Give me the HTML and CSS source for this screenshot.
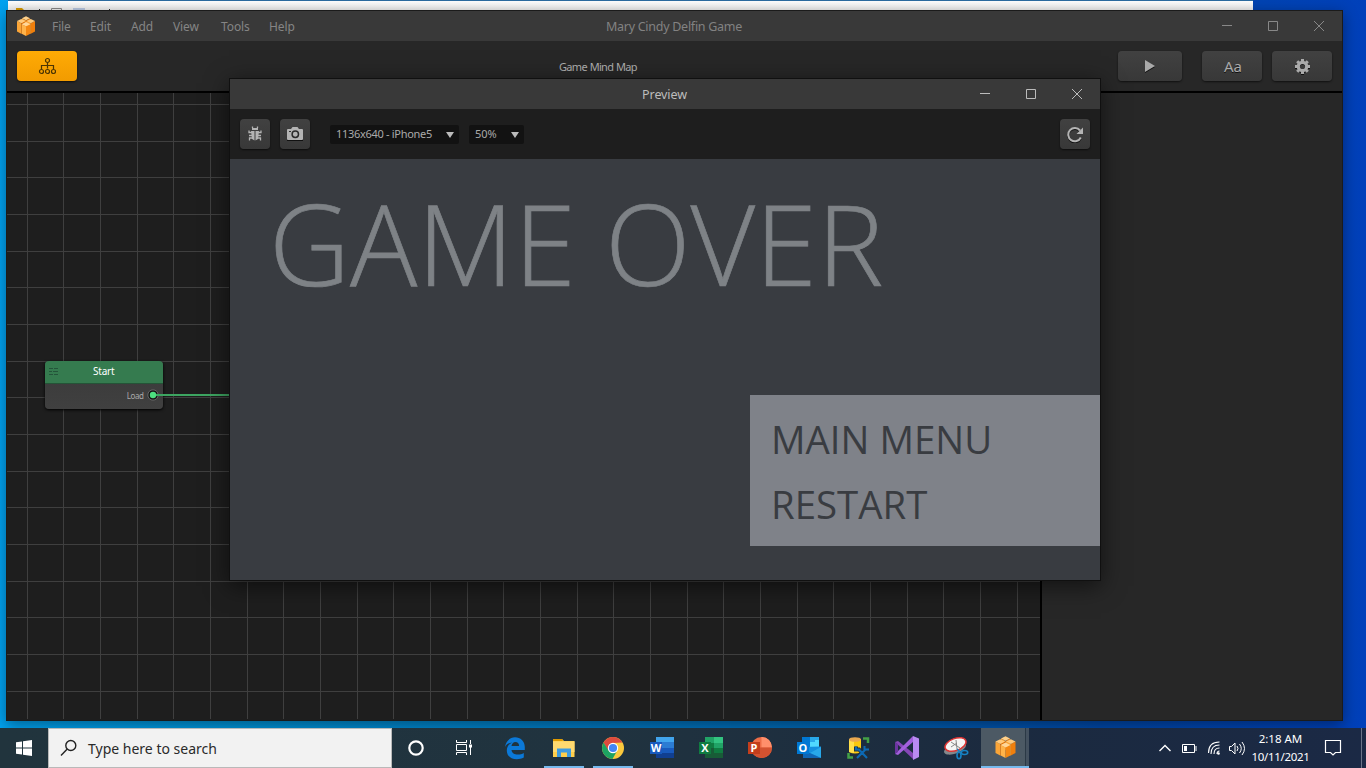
FILE: index.html
```html
<!DOCTYPE html>
<html lang="en">
<head>
<meta charset="utf-8">
<title>Mary Cindy Delfin Game</title>
<link rel="stylesheet" href="styles.css">
</head>
<body>
<svg width="0" height="0" class="defs">
  <symbol id="box" viewBox="0 0 20 22">
    <path d="M5.500 2.500 10 5v9l-4.500-2z" fill="#f9a030"/><path d="M14.500 2.500 10 5v9l4.500-2z" fill="#ea7c10"/>
    <path d="M5.500 2.500 10 .3l4.500 2.200L10 4.700z" fill="#ffd08a"/>
    <path d="M0 5.500 4.700 8v11.500L0 17z" fill="#fba537"/><path d="M4.700 8 9.500 5.500v13l-4.800 1z" fill="#dd6f08"/>
    <path d="M0 5.500 4.700 3.200 9.500 5.500 4.700 7.900z" fill="#ffca7c"/>
    <path d="M10.500 5.500 15.300 8v11.500l-4.800-1z" fill="#fba537"/><path d="M15.300 8 20 5.500V17l-4.700 2.500z" fill="#f07f0c"/>
    <path d="M10.500 5.500l4.800-2.300L20 5.500l-4.700 2.400z" fill="#ffca7c"/>
    <path d="M5.200 9 10 11.500V22l-4.800-2.500z" fill="#ffb34a"/><path d="M10 11.500 14.800 9v10.500L10 22z" fill="#f48712"/>
    <path d="M5.200 9 10 6.600 14.800 9 10 11.400z" fill="#ffd698"/>
  </symbol>
</svg>
<main class="desktop">
  <div class="back-window">
    <svg width="120" height="9"><path d="M8 7h6l2 2H8z" fill="#d79a00"/><path d="M31 8h1v1h-1zM101 8h1v1h-1z" fill="#333"/><path d="M43.500 9V7.500h10V9" fill="none" stroke="#888"/><path d="M65 7h12v2H65z" fill="#b9c9e2"/></svg>
  </div>

  <section class="window app">
    <header class="titlebar">
      <svg class="logo" width="18" height="20"><use href="#box"/></svg>
      <nav class="menu"><span>File</span><span>Edit</span><span>Add</span><span>View</span><span>Tools</span><span>Help</span></nav>
      <h1 class="title app-title">Mary Cindy Delfin Game</h1>
      <div class="controls">
        <svg width="46" height="30"><path d="M18 14.500h10"/></svg>
        <svg width="46" height="30"><path d="M18.500 10.500h9v9h-9z"/></svg>
        <svg width="46" height="30"><path d="M18 10l10 10M28 10l-10 10"/></svg>
      </div>
    </header>
    <div class="toolbar">
      <button class="btn map-btn">
        <svg width="18" height="18" fill="none" stroke="#4c3503" stroke-width="1.200"><circle cx="9.500" cy="3.500" r="2"/><path d="M9.500 5.500v6M3.500 12V8.500h12V12"/><circle cx="3.500" cy="14.500" r="2"/><circle cx="9.500" cy="14.500" r="2"/><circle cx="15.500" cy="14.500" r="2"/></svg>
      </button>
      <div class="crumb">Game Mind Map</div>
      <button class="btn play-btn"><svg width="12" height="14"><path d="M1 2l10 6-10 6z" fill="#111"/><path d="M1 1l10 6-10 6z" fill="#aaa"/></svg></button>
      <button class="btn font-btn">Aa</button>
      <button class="btn gear-btn"><svg width="16" height="17" viewBox="-8.500 -8.500 16 17"><g fill="none" stroke="#111"><circle cy="1" r="4.200" stroke-width="3"/><path d="M0-6.500v2M0 6.500v2M-7.500 1h2M5.500 1h2" stroke-width="3"/></g><g fill="none" stroke="#aaa"><circle r="4.200" stroke-width="3.200"/><path d="M0-7.500v2.500M0 7.500V5M-7.500 0H-5M7.500 0H5M-5.300-5.300l1.800 1.800M5.300 5.300 3.500 3.500M5.300-5.300 3.500-3.500M-5.300 5.300l1.800-1.800" stroke-width="3"/></g></svg></button>
    </div>
    <div class="workspace">
      <div class="mindmap">
        <svg class="grid" width="1033" height="627" viewBox="7 93 1033 627" fill="none" stroke="#3f3f3f"><path d="M27.500 93v626M63.500 93v626M100.500 93v626M137.500 93v626M173.500 93v626M210.500 93v626M247.500 93v626M283.500 93v626M320.500 93v626M357.500 93v626M393.500 93v626M430.500 93v626M467.500 93v626M503.500 93v626M540.500 93v626M577.500 93v626M613.500 93v626M650.500 93v626M687.500 93v626M723.500 93v626M760.500 93v626M797.500 93v626M833.500 93v626M870.500 93v626M907.500 93v626M943.500 93v626M980.500 93v626M1017.500 93v626M7 104.500h1033M7 141.500h1033M7 177.500h1033M7 214.500h1033M7 251.500h1033M7 287.500h1033M7 324.500h1033M7 361.500h1033M7 397.500h1033M7 434.500h1033M7 471.500h1033M7 507.500h1033M7 544.500h1033M7 581.500h1033M7 617.500h1033M7 654.500h1033M7 691.500h1033"/></svg>
        <div class="node">
          <div class="node-head">
            <svg width="10" height="8" stroke="#24543a"><path d="M0 1.500h4M5 1.500h4M0 4.500h3M4 4.500h5M0 7.500h4M5 7.500h4"/></svg>
            <span>Start</span>
          </div>
          <div class="node-body">Load</div>
        </div>
        <svg class="wire" width="100" height="14"><circle cx="7" cy="7" r="5.200" fill="#161616" stroke="#666"/><path d="M7 7h93" stroke="#3da561" stroke-width="2"/><circle cx="7" cy="7" r="3.200" fill="#4ddf80"/></svg>
      </div>
      <aside class="side"></aside>
    </div>
  </section>

  <section class="window preview">
    <header class="titlebar">
      <h2 class="title preview-title">Preview</h2>
      <div class="controls light">
        <svg width="46" height="30"><path d="M18 14.500h10"/></svg>
        <svg width="46" height="30"><path d="M18.500 10.500h9v9h-9z"/></svg>
        <svg width="46" height="30"><path d="M18 10l10 10M28 10l-10 10"/></svg>
      </div>
    </header>
    <div class="preview-tools">
      <button class="btn square"><svg width="14" height="16"><g fill="none" stroke="#b4b4b4" stroke-width="1.300"><path d="M4.500.5v1.500M9.500.5v1.500M1 4.500v2h3M1 9.500h3M1.500 14.500V12H4M13 4.500v2h-3M13 9.500h-3M12.500 14.500V12H10"/></g><path d="M4 2h6v2H4zM3 5h3.500v9.500L4 13zM7.500 5H11l-1 8-2.500 1.500z" fill="#b4b4b4"/></svg></button>
      <button class="btn square"><svg width="16" height="16"><path d="M0 4h4l2-2h5l1.500 2H16v11H0z" fill="#111"/><path d="M1 3h3l1.500-2h5L12 3h3q1 0 1 1v9q0 1-1 1H1q-1 0-1-1V4q0-1 1-1z" fill="#b4b4b4"/><circle cx="8.300" cy="8.300" r="3.200" fill="none" stroke="#2b2b2b" stroke-width="1.500"/><path d="M2 5h2v1H2z" fill="#333"/></svg></button>
      <div class="select device"><span>1136x640 - iPhone5</span><i></i></div>
      <div class="select scale"><span>50%</span><i></i></div>
      <button class="btn square reload"><svg width="16" height="17" fill="none"><path d="M13.800 12.500A6.600 6.600 0 1 1 13 5.500" stroke="#111" stroke-width="2"/><path d="M13.800 11.500A6.600 6.600 0 1 1 13 4.500" stroke="#b4b4b4" stroke-width="2"/><path d="M16 1.500V8H9.500z" fill="#b4b4b4"/></svg></button>
    </div>
    <div class="stage">
      <div class="game-over">GAME OVER</div>
      <div class="choices"><span class="main-menu">MAIN MENU</span><span class="restart">RESTART</span></div>
    </div>
  </section>
</main>

<footer class="taskbar">
  <div class="start"><svg width="16" height="16" fill="#fff"><path d="M0 2.300 6 1.400V7.500H0zM7 1.200 16 0v7.500H7zM0 8.500h6v6.100l-6-.9zM7 8.500h9V16l-9-1.200z"/></svg></div>
  <div class="search"><svg width="18" height="18" fill="none" stroke="#222" stroke-width="1.400"><circle cx="10.800" cy="6.500" r="5"/><path d="M7 10.200 1 16.500"/></svg><span>Type here to search</span></div>
  <div class="tasks">
    <div class="task shell"><svg width="24" height="24"><circle cx="12" cy="12" r="6.700" fill="none" stroke="#fff" stroke-width="2.200"/></svg></div>
    <div class="task shell"><svg width="24" height="24" fill="none" stroke="#fff"><path d="M3.500 4v2.500h10V4M3.500 19v-2.500h10V19M3.500 8.500h10v6h-10zM17.500 4v4M17.500 11v8"/><path d="M16 8.500h3v3h-3z" fill="#fff" stroke="none"/></svg></div>
    <div class="task"><svg width="24" height="24"><path d="M2 11C3 4.500 7.500 1.200 12 1.200c5.500 0 9.800 4 9.800 9.800v3H8.500c.2 3 3.200 4.600 6.300 4.600 2.300 0 4.400-.6 6-1.600v4.600c-2 1-4.500 1.600-7 1.600-5.500 0-10-3.200-10-8.800 0-3.600 2-6.500 5.500-8C5.500 6.800 3.500 8.500 2 11zm6.500-1h7.600c0-2.500-1.500-4-3.700-4-2.100 0-3.600 1.700-3.900 4z" fill="#0b79d8" fill-rule="evenodd"/></svg></div>
    <div class="task running"><svg width="24" height="24"><path d="M1 3h9l2 2h10.500v16H1z" fill="#ffcf4b"/><path d="M1 3h9l1 2H1z" fill="#e09a00"/><path d="M1 5.500h21.500V16H1z" fill="#ffda70"/><path d="M5 12.500h14V21h-4v-4.500H9V21H5z" fill="#3e9be0"/></svg></div>
    <div class="task running"><svg width="24" height="24" viewBox="0 0 24 24"><circle cx="12" cy="12" r="11" fill="#fbc93d"/><path d="M2.500 6.500A11 11 0 0 1 21.500 6.500L12 7l-5 8z" fill="#dd4b3e"/><path d="M2.500 6.500A11 11 0 0 0 11.500 23l4.500-8-4 2-4.500-2.500z" fill="#1da362"/><circle cx="12" cy="12" r="5.200" fill="#fff"/><circle cx="12" cy="12" r="4.100" fill="#4285f4"/></svg></div>
    <div class="task"><svg width="24" height="24"><path d="M6 1h18v6H6z" fill="#41a5ee"/><path d="M6 6h18v6H6z" fill="#2b7cd3"/><path d="M6 12h18v5H6z" fill="#185abd"/><path d="M6 17h18v5H6z" fill="#103f91"/><path d="M0 6h12v12H0z" fill="#185abd"/><text class="office" x="6" y="16">W</text></svg></div>
    <div class="task"><svg width="24" height="24"><path d="M6 1h9v6H6z" fill="#21a366"/><path d="M15 1h9v6h-9z" fill="#33c481"/><path d="M6 7h9v5H6z" fill="#107c41"/><path d="M15 7h9v5h-9z" fill="#21a366"/><path d="M6 12h18v10H6z" fill="#185c37"/><path d="M15 12h9v5h-9z" fill="#107c41"/><path d="M0 6h12v12H0z" fill="#107c41"/><text class="office" x="6" y="16">X</text></svg></div>
    <div class="task"><svg width="24" height="24"><circle cx="13.500" cy="11.500" r="10.500" fill="#ed6c47"/><path d="M13.500 1a10.500 10.500 0 0 1 10.500 10.500H13.500z" fill="#ff8f6b"/><path d="M3 11.500h21a10.500 10.500 0 0 1-21 0z" fill="#d35230"/><path d="M0 6h12v12H0z" fill="#c43e1c"/><text class="office" x="6" y="16">P</text></svg></div>
    <div class="task"><svg width="24" height="24"><path d="M5 1h17v13H5z" fill="#0078d4"/><path d="M13 1h9v5h-9z" fill="#28a8ea"/><path d="M18 4h4v7h-9V6h5z" fill="#50d9ff"/><path d="M6 11l18-.5V22H6z" fill="#1490df"/><path d="M24 11v11L13 17z" fill="#28a8ea"/><path d="M6 14l18 8H6z" fill="#1066b5"/><path d="M0 6h12v12H0z" fill="#0078d4"/><text class="office" x="6" y="16">O</text></svg></div>
    <div class="task"><svg width="24" height="24"><path d="M3 3h12v13q-6 3-12 0z" fill="#f9c80e"/><path d="M3 3h5v14l-5-1z" fill="#ffe04a"/><ellipse cx="9" cy="3.500" rx="6" ry="2.300" fill="#e9a850"/><path d="M17 2.500h5V7M2.500 17v4.500H7" fill="none" stroke="#43a047" stroke-width="2.500"/><path d="M10 10.500v3h3l8 8.500M11 22l9-9M18.500 10v3.500H23" fill="none" stroke="#20323e" stroke-width="4"/><path d="M10 10.500v3h3l8 8.500M11 22l9-9M18.500 10v3.500H23" fill="none" stroke="#0c69b5" stroke-width="2"/></svg></div>
    <div class="task"><svg width="24" height="24"><path d="M0 6l3-1 15 12v6z" fill="#8547b7"/><path d="M0 18l3 1L18 6V0z" fill="#a260dc"/><path d="M0 6l3 2v8l-3 2z" fill="#6a35a0"/><path d="M18 0l6 2.500v18.500L18 24z" fill="#b98af2"/></svg></div>
    <div class="task"><svg width="26" height="24"><ellipse cx="12" cy="12.500" rx="11.500" ry="5" transform="rotate(-20 12 12.500)" fill="#84888c"/><ellipse cx="12.500" cy="8.500" rx="11" ry="6" transform="rotate(-20 12.500 8.500)" fill="#f5f5f5" stroke="#dc3535" stroke-width="1.500"/><path d="M8 6l9 6M13 4l1 9M8 11l6-4" stroke="#888" fill="none"/><g fill="none" stroke="#1682c4" stroke-width="1.600"><ellipse cx="16" cy="19.500" rx="2" ry="3.200"/><ellipse cx="21.500" cy="16.500" rx="3.200" ry="2"/><path d="M14 13l4 4"/></g></svg></div>
    <div class="task active"><svg width="21" height="22"><use href="#box"/></svg></div>
  </div>
  <div class="tray">
    <svg width="204" height="40" viewBox="1150 0 204 40" fill="none" stroke="#fff">
      <path d="M1159.500 23l5.500-5.500 5.500 5.500" stroke-width="1.400"/>
      <path d="M1182.500 16.500h12v8h-12zM1196 18v5"/><path d="M1184 18h3v5h-3z" fill="#fff" stroke="none"/>
      <path d="M1208.500 25c0-8 4-11 11-11M1211 26c0-6 3-9 8.500-9M1214 26c0-4 2-6 5.500-6M1217 26q0-3 2.500-3" stroke-width="1.100"/><circle cx="1218.500" cy="25.500" r="1.300" fill="#fff" stroke="none"/>
      <path d="M1229.500 18.500h2l3.500-3.500v11l-3.500-3.500h-2zM1237 18q2 2.500 0 5M1239.500 16q3.500 4.500 0 9M1242 14q5 6.500 0 13"/>
    </svg>
    <div class="clock"><span class="time">2:18 AM</span><span class="date">10/11/2021</span></div>
    <svg class="notice" width="18" height="18" fill="none" stroke="#fff" stroke-width="1.200"><path d="M1.500 1.500h15v12h-5l-2.500 2.500-2.500-2.500h-5z"/></svg>
    <i class="peek"></i>
  </div>
</footer>
</body>
</html>
```
FILE: styles.css
```css
* { box-sizing: border-box; }
body { margin: 0; width: 1366px; height: 768px; overflow: hidden; font-family: "Noto Sans", "Open Sans", sans-serif; background: #0a2a50; }
svg { display: block; flex: none; }
.defs { position: absolute; }
button { border: 0; padding: 0; font: inherit; }
.desktop { position: relative; height: 728px; overflow: hidden; background: linear-gradient(90deg, #00a2f0 0, #0094d8 240px, #0068b4 800px, #0048a8 1100px, #0040ba 1366px); }
.back-window { position: absolute; left: 8px; top: 0; width: 1245px; height: 40px; background: linear-gradient(#fff, #ececec 10px); border-top: 1px solid #2c6ca0; }
.window { position: absolute; display: flex; flex-direction: column; }
.app { left: 6px; top: 10px; width: 1337px; height: 711px; border: 1px solid #1b1b1b; box-shadow: 0 4px 14px rgba(0,0,0,.4); }
.titlebar { height: 30px; flex: none; display: flex; align-items: center; background: #393939; position: relative; }
.logo { margin-left: 10px; }
.menu { display: grid; grid-template-columns: 38px 41px 42px 48px 48px 30px; margin-left: 17px; font-size: 12px; letter-spacing: -.1px; color: #858585; line-height: 30px; padding-top: 2px; }
.title { margin: 0; position: absolute; top: 1px; left: 0; right: 1px; text-align: center; font-size: 12.500px; font-weight: 400; line-height: 30px; }
.app-title { color: #828282; letter-spacing: -.27px; }
.preview-title { color: #bdbdbd; letter-spacing: -.1px; }
.controls { margin-left: auto; display: flex; position: relative; }
.controls svg { fill: none; stroke: #888; }
.controls.light svg { stroke: #bbb; }
.toolbar { height: 52px; flex: none; background: #272727; border-bottom: 2px solid #000; display: flex; align-items: center; padding: 0 10px; }
.btn { height: 30px; border-radius: 4px; background: linear-gradient(#414141, #383838); box-shadow: 0 1px 2px rgba(0,0,0,.6); display: flex; align-items: center; justify-content: center; color: #aaa; }
.map-btn { width: 60px; background: linear-gradient(#ffab05, #f29b00); }
.crumb { font-size: 11px; letter-spacing: -.68px; word-spacing: .5px; color: #b0b0b0; margin-left: 482px; padding-top: 1px; width: 90px; white-space: nowrap; }
.play-btn { width: 64px; margin-left: auto; margin-right: 20px; }
.font-btn { width: 60px; margin-right: 10px; font-size: 15px; text-shadow: 0 1px #111; padding-left: 2px; }
.gear-btn { width: 60px; }
.workspace { flex: 1; display: flex; min-height: 0; }
.mindmap { width: 1033px; background: #1e1e1e; position: relative; overflow: hidden; }
.side { flex: 1; background: #272727; border-left: 2px solid #000; }
.node { position: absolute; left: 38px; top: 267.500px; width: 117.500px; height: 48.500px; border-radius: 4px; overflow: hidden; background: linear-gradient(#393939, #404040); box-shadow: 0 1px 3px #000; }
.node-head { height: 23px; background: #357b4f; border-bottom: 1px solid #245437; display: flex; align-items: center; padding: 0 0 1px 4px; color: #fff; font-size: 10px; letter-spacing: -.2px; }
.node-head span { margin-left: 34px; }
.node-body { font-size: 8px; letter-spacing: -.4px; color: #aaa; text-align: right; padding-right: 19px; line-height: 23px; }
.wire { position: absolute; left: 139px; top: 295px; }
.preview { left: 229px; top: 78px; width: 872px; height: 503px; border: 1px solid #101010; box-shadow: 0 5px 22px rgba(0,0,0,.55); }
.preview-tools { height: 50px; flex: none; background: #1e1e1e; display: flex; align-items: center; padding: 0 10px; gap: 10px; }
.square { width: 30px; }
.select { height: 19px; background: #121212; border-radius: 2px; display: flex; align-items: center; justify-content: space-between; padding: 0 5px 0 6px; font-size: 11px; color: #aaa; white-space: nowrap; }
.select span { margin-top: -1px; }
.select i { border: 4px solid transparent; border-top: 6px solid #bbb; border-bottom: 0; margin-top: 1px; }
.device { width: 129px; margin-left: 10px; letter-spacing: -.3px; }
.scale { width: 55px; }
.reload { margin-left: auto; }
.stage { flex: 1; background: #393c41; position: relative; font-family: "Open Sans", "Noto Sans", sans-serif; overflow: hidden; }
.game-over { position: absolute; left: 39px; top: 4px; font-size: 112px; font-weight: 300; line-height: 160px; color: #7e8286; -webkit-text-stroke: .7px #7e8286; white-space: nowrap; }
.choices { position: absolute; right: 0; top: 236px; width: 350px; height: 151px; padding: 12px 0 0 21px; background: #7f8289; display: flex; flex-direction: column; color: #393c41; font-size: 38.400px; line-height: 65px; white-space: nowrap; }
.taskbar { height: 40px; display: flex; background: linear-gradient(90deg, #21343d 0, #20333f 600px, #1b2a3f 1000px, #1b2945 1366px); color: #fff; }
.start { width: 48px; display: flex; align-items: center; justify-content: center; }
.search { width: 344px; background: #f2f2f2; border: 1px solid #b9b9b9; display: flex; align-items: center; padding-left: 11px; font-size: 14px; color: #2a2a2a; }
.search span { margin-left: 10px; }
.tasks { display: flex; }
.task { width: 49px; display: flex; align-items: center; justify-content: center; position: relative; }
.shell { padding-right: 2px; }
.running::after { content: ""; position: absolute; left: 5px; right: 4px; bottom: 0; height: 2px; background: #76b9ed; }
.active { width: 48px; margin-left: 1px; background: linear-gradient(90deg, #4c5964 44px, #2b3946 44px, #2b3946 45px, #44515f 45px); border-bottom: 2px solid #76b9ed; }
.office { font: 700 11px "Open Sans", sans-serif; fill: #fff; text-anchor: middle; stroke: none; }
.tray { margin-left: auto; display: flex; width: 216px; align-items: center; position: relative; }
.tray > svg:first-child { margin-right: -108px; }
.clock { width: 69px; display: flex; flex-direction: column; align-items: center; font-size: 11.500px; line-height: 18px; white-space: nowrap; }
.date { letter-spacing: -.3px; }
.notice { margin-left: 9px; }
.peek { width: 1px; height: 40px; background: #6a7488; margin-left: 19px; }
```
